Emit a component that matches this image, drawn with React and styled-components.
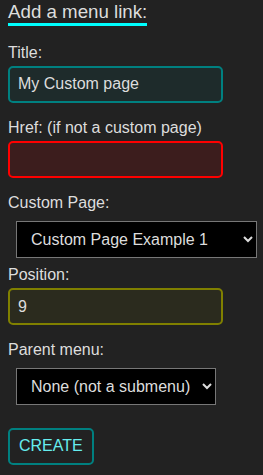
import styled, { createGlobalStyle } from "styled-components";

const GlobalStyle = createGlobalStyle`
  html, body {
    margin: 0;
    background: #222222;
  }
  body {
    font-family: "Liberation Sans", Arial, sans-serif;
    color: #dddddd;
  }
`;

const Panel = styled.form`
  display: flex;
  flex-direction: column;
  align-items: flex-start;
  padding: 2px 8px 10px;
`;

const Heading = styled.h2`
  margin: 0 0 18px;
  font-size: 18.72px;
  font-weight: normal;
  line-height: 20.5px;
  border-bottom: 3px solid #00ffff;
`;

const Label = styled.label`
  display: block;
  font-size: 16px;
  line-height: 18.4px;
`;

const tones = {
  teal: { border: "#008080", bg: "rgba(0, 128, 128, 0.1)" },
  red: { border: "#ff0000", bg: "rgba(255, 0, 0, 0.12)" },
  olive: { border: "#808000", bg: "rgba(128, 128, 0, 0.1)" },
};

const TextInput = styled.input`
  box-sizing: border-box;
  width: 215px;
  height: 37px;
  margin: 4px 0 16px;
  padding: 0 8px;
  border: 2px solid ${(p) => tones[p.$tone].border};
  border-radius: 5px;
  background: ${(p) => tones[p.$tone].bg};
  color: #dddddd;
  font-family: "Liberation Sans", Arial, sans-serif;
  font-size: 16px;
  outline: none;
`;

const Select = styled.select`
  box-sizing: border-box;
  width: ${(p) => p.$width}px;
  height: 37px;
  margin: 8px 8px 8px;
  padding: 0 4px 0 10px;
  border: 1px solid #777777;
  border-radius: 0;
  background: #000000;
  color: #dddddd;
  font-family: "Liberation Sans", Arial, sans-serif;
  font-size: 16px;
`;

const Button = styled.button`
  box-sizing: border-box;
  height: 37px;
  margin-top: 15px;
  padding: 0 9px;
  border: 2px solid #008080;
  border-radius: 5px;
  background: transparent;
  color: #66eeee;
  font-family: "Liberation Sans", Arial, sans-serif;
  font-size: 16px;
  cursor: pointer;
`;

export default function App() {
  return (
    <>
      <GlobalStyle />
      <Panel onSubmit={(e) => e.preventDefault()}>
        <Heading>Add a menu link:</Heading>

        <Label htmlFor="title">Title:</Label>
        <TextInput id="title" $tone="teal" defaultValue="My Custom page" />

        <Label htmlFor="href">Href: (if not a custom page)</Label>
        <TextInput id="href" $tone="red" defaultValue="" />

        <Label htmlFor="page">Custom Page:</Label>
        <Select id="page" $width={241} defaultValue="1">
          <option value="1">Custom Page Example 1</option>
          <option value="2">Custom Page Example 2</option>
        </Select>

        <Label htmlFor="position">Position:</Label>
        <TextInput id="position" $tone="olive" defaultValue="9" />

        <Label htmlFor="parent">Parent menu:</Label>
        <Select id="parent" $width={200} defaultValue="none">
          <option value="none">None (not a submenu)</option>
        </Select>

        <Button type="submit">CREATE</Button>
      </Panel>
    </>
  );
}
